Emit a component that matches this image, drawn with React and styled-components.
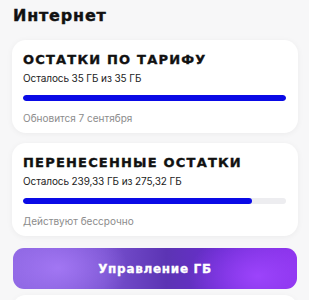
import React from "react";
import styled, { createGlobalStyle } from "styled-components";

const Global = createGlobalStyle`
  html, body { margin: 0; padding: 0; background: #f7f7f8; }
  body { font-family: Inter, "Noto Sans", sans-serif; -webkit-font-smoothing: antialiased; }
`;

const Page = styled.div`
  width: 309px;
  height: 300px;
  overflow: hidden;
  padding: 6px 11px 0 12px;
  box-sizing: border-box;
  display: flex;
  flex-direction: column;
  & > * { flex-shrink: 0; }
`;

const Title = styled.h1`
  margin: 0 0 0 1px;
  font-family: "DejaVu Sans", sans-serif;
  font-weight: 700;
  font-size: 16px;
  line-height: 20px;
  letter-spacing: 0.8px;
  color: #111;
  -webkit-text-stroke: 0.4px #111;
`;

const Cards = styled.div`
  margin-top: 14px;
  display: flex;
  flex-direction: column;
  gap: 10px;
`;

const Card = styled.section`
  background: #fff;
  border-radius: 14px;
  box-shadow: 0 1px 6px rgba(0, 0, 0, 0.05);
  padding: 12px 12px 8px 11px;
  display: flex;
  flex-direction: column;
`;

const CardTitle = styled.h2`
  margin: 0;
  font-family: "DejaVu Sans", sans-serif;
  font-weight: 700;
  font-size: 13px;
  line-height: 16px;
  letter-spacing: 1.2px;
  color: #111;
  white-space: nowrap;
  -webkit-text-stroke: 0.35px #111;
`;

const Remain = styled.div`
  margin-top: 4px;
  font-size: 10px;
  line-height: 13px;
  color: #222;
  letter-spacing: -0.1px;
`;

const Track = styled.div`
  margin-top: 10px;
  height: 6px;
  border-radius: 3px;
  background: #ededf0;
  overflow: hidden;
`;

const Fill = styled.div`
  height: 100%;
  border-radius: 3px;
  background: #0a0ae6;
`;

const Note = styled.div`
  margin-top: 11px;
  font-size: 10px;
  line-height: 13px;
  color: #8c8c8c;
`;

const Button = styled.button`
  margin: 12px 1px 0 1px;
  height: 41px;
  border: none;
  border-radius: 11px;
  color: #fff;
  font-family: "DejaVu Sans", sans-serif;
  font-weight: 700;
  font-size: 12px;
  letter-spacing: 0.7px;
  -webkit-text-stroke: 0.3px #fff;
  background:
    radial-gradient(ellipse 70px 45px at 45px 20px, rgba(170, 125, 250, 0.8), rgba(170, 125, 250, 0) 100%),
    radial-gradient(ellipse 70px 45px at 245px 28px, rgba(160, 70, 255, 0.9), rgba(160, 70, 255, 0) 100%),
    linear-gradient(90deg, #8a64df 0%, #7852cf 32%, #5c34b4 54%, #6a2cd0 74%, #8a30ea 100%);
`;

const Below = styled.div`
  margin-top: 6px;
  height: 20px;
  background: #fff;
  border-radius: 14px 14px 0 0;
  box-shadow: 0 1px 6px rgba(0, 0, 0, 0.04);
`;

const data = [
  { title: "ОСТАТКИ ПО ТАРИФУ", remain: "Осталось 35 ГБ из 35 ГБ", pct: 100, note: "Обновится 7 сентября" },
  { title: "ПЕРЕНЕСЕННЫЕ ОСТАТКИ", remain: "Осталось 239,33 ГБ из 275,32 ГБ", pct: 86.9, note: "Действуют бессрочно" },
];

export default function App() {
  return (
    <>
      <Global />
      <Page>
        <Title>Интернет</Title>
        <Cards>
          {data.map((d) => (
            <Card key={d.title}>
              <CardTitle>{d.title}</CardTitle>
              <Remain>{d.remain}</Remain>
              <Track>
                <Fill style={{ width: `${d.pct}%` }} />
              </Track>
              <Note>{d.note}</Note>
            </Card>
          ))}
        </Cards>
        <Button>Управление ГБ</Button>
        <Below />
      </Page>
    </>
  );
}
